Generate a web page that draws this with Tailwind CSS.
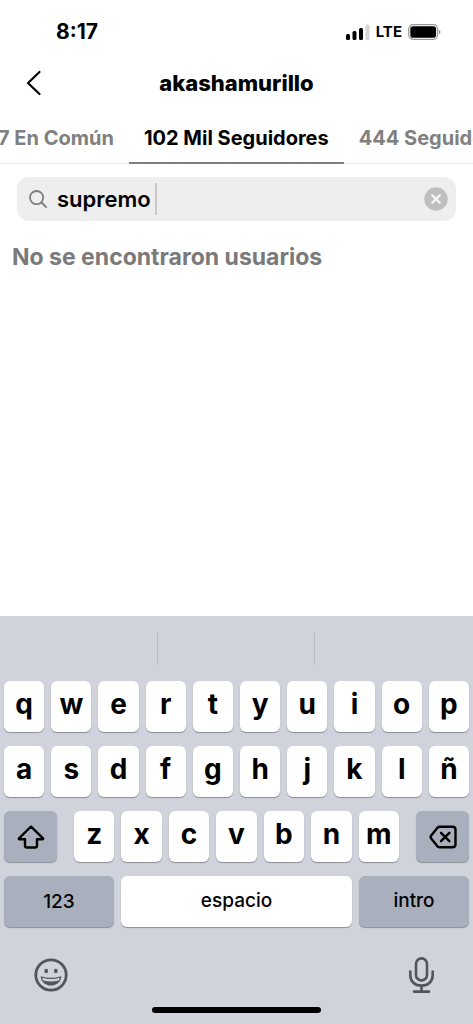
<!DOCTYPE html>
<html lang="es">
<head>
    <meta charset="UTF-8" />
    <meta name="viewport" content="width=device-width, initial-scale=1.0" />
    <title>akashamurillo | Seguidores</title>
    <script src="https://cdn.jsdelivr.net/npm/@tailwindcss/browser@4"></script>
</head>
<body class="bg-white text-black font-['Inter','Liberation_Sans',sans-serif]">
    <div class="flex flex-col min-h-screen overflow-hidden">

        <!-- Status Bar -->
        <div class="flex items-center justify-between h-14 pt-2 pl-14 pr-8">
            <span class="text-[21px] font-bold">8:17</span>
            <div class="flex items-center gap-1.5">
                <svg class="w-6 h-4" viewBox="0 0 24 16" aria-hidden="true">
                    <rect x="0" y="10" width="4" height="6" rx="1.5" />
                    <rect x="6.5" y="7" width="4" height="9" rx="1.5" />
                    <rect x="13" y="4" width="4" height="12" rx="1.5" />
                    <rect x="19.5" y="0.5" width="4" height="15.5" rx="1.5" fill="#d4d4d4" />
                </svg>
                <span class="text-[15px] font-bold">LTE</span>
                <svg class="w-[33px] h-4" viewBox="0 0 33 16" aria-hidden="true">
                    <rect x="0.7" y="0.7" width="29" height="14.6" rx="4.5" fill="none" stroke="#9a9a9a" stroke-width="1.2" />
                    <rect x="2.3" y="2.3" width="25.8" height="11.4" rx="2.8" />
                    <path d="M31 5.8c2 .9 2 3.5 0 4.4z" fill="#9a9a9a" />
                </svg>
            </div>
        </div>

        <!-- Header -->
        <header class="grid grid-cols-[48px_1fr_48px] items-center h-[54px]">
            <a href="#" aria-label="Atrás" class="flex justify-end pr-1.5">
                <svg class="w-4 h-7" viewBox="0 0 16 28" fill="none" stroke="currentColor" stroke-width="2.2" stroke-linecap="round" stroke-linejoin="round" aria-hidden="true">
                    <path d="M13.5 3L2 14l11.5 11" />
                </svg>
            </a>
            <h1 class="text-[22px] font-extrabold text-center">akashamurillo</h1>
        </header>

        <!-- Tabs -->
        <nav class="flex h-[54px] -ml-0.5 border-b border-gray-200 text-xl font-bold text-[#808080] whitespace-nowrap">
            <a href="#" class="flex items-center pt-0.5 pr-[15px] shrink-0">7 En Común</a>
            <a href="#" class="flex items-center pt-1 px-[15px] -mb-px shrink-0 text-black border-b-2 border-[#808080]">102 Mil Seguidores</a>
            <a href="#" class="flex items-center pt-0.5 pl-[15px] shrink-0">444 Seguidos</a>
        </nav>

        <!-- Search -->
        <main class="flex-1">
            <div class="flex items-center h-11 mt-[13px] mx-[17px] pl-3 pr-2 rounded-xl bg-[#eeeeee]">
                <svg class="w-[18px] h-[18px] mr-2.5 shrink-0 text-[#7f7f7f]" viewBox="0 0 18 18" fill="none" stroke="currentColor" stroke-width="1.8" stroke-linecap="round" aria-hidden="true">
                    <circle cx="7.6" cy="7.6" r="6.6" />
                    <path d="M12.5 12.5l4.5 4.5" />
                </svg>
                <input type="text" value="supremo" aria-label="Buscar" class="field-sizing-content text-[22px] font-semibold outline-none" />
                <span class="w-0.5 h-8 ml-1 bg-[#c9c9c9]"></span>
                <button type="button" aria-label="Borrar" class="ml-auto">
                    <svg class="w-6 h-6" viewBox="0 0 24 24" aria-hidden="true">
                        <circle cx="12" cy="12" r="11.7" fill="#bfbfbf" />
                        <path d="M8.3 8.3l7.4 7.4M15.7 8.3l-7.4 7.4" stroke="#f4f4f4" stroke-width="2.4" stroke-linecap="round" />
                    </svg>
                </button>
            </div>
            <p class="mt-5 ml-3 text-[23px] leading-8 font-bold text-[#7a7a7a]">No se encontraron usuarios</p>
        </main>

        <!-- Keyboard -->
        <div class="bg-[#d0d3dc]">
            <div class="grid grid-cols-3 h-[65px] py-4">
                <span class="border-r border-[#bcc0c9]"></span>
                <span class="border-r border-[#bcc0c9]"></span>
            </div>

            <div class="flex flex-col gap-[14px] px-1 text-[28px] leading-8 font-bold [&_button]:h-[51px] [&_button]:rounded-md [&_button]:shadow-[0_1px_1px_#8a8d94]">
                <div class="grid grid-cols-10 gap-[7px]">
                    <button type="button" class="pb-1.5 bg-white">q</button>
                    <button type="button" class="pb-1.5 bg-white">w</button>
                    <button type="button" class="pb-1.5 bg-white">e</button>
                    <button type="button" class="pb-1.5 bg-white">r</button>
                    <button type="button" class="pb-1.5 bg-white">t</button>
                    <button type="button" class="pb-1.5 bg-white">y</button>
                    <button type="button" class="pb-1.5 bg-white">u</button>
                    <button type="button" class="pb-1.5 bg-white">i</button>
                    <button type="button" class="pb-1.5 bg-white">o</button>
                    <button type="button" class="pb-1.5 bg-white">p</button>
                </div>

                <div class="grid grid-cols-10 gap-[7px]">
                    <button type="button" class="pb-1.5 bg-white">a</button>
                    <button type="button" class="pb-1.5 bg-white">s</button>
                    <button type="button" class="pb-1.5 bg-white">d</button>
                    <button type="button" class="pb-1.5 bg-white">f</button>
                    <button type="button" class="pb-1.5 bg-white">g</button>
                    <button type="button" class="pb-1.5 bg-white">h</button>
                    <button type="button" class="pb-1.5 bg-white">j</button>
                    <button type="button" class="pb-1.5 bg-white">k</button>
                    <button type="button" class="pb-1.5 bg-white">l</button>
                    <button type="button" class="pb-1.5 bg-white">ñ</button>
                </div>

                <div class="flex gap-[17px]">
                    <button type="button" aria-label="Mayúsculas" class="flex items-center justify-center w-[53px] bg-[#a9afbc]">
                        <svg class="w-7 h-6" viewBox="0 0 28 24" fill="none" stroke="currentColor" stroke-width="2.4" stroke-linejoin="round" aria-hidden="true">
                            <path d="M14 1.5L2 13.3q-.5.9.5.9H8v6.300q0 2 2 2h8q2 0 2-2v-6.300h5.500q1 0 .5-.9z" />
                        </svg>
                    </button>
                    <div class="grid grid-cols-7 gap-[7px] flex-1">
                        <button type="button" class="pb-1.5 bg-white">z</button>
                        <button type="button" class="pb-1.5 bg-white">x</button>
                        <button type="button" class="pb-1.5 bg-white">c</button>
                        <button type="button" class="pb-1.5 bg-white">v</button>
                        <button type="button" class="pb-1.5 bg-white">b</button>
                        <button type="button" class="pb-1.5 bg-white">n</button>
                        <button type="button" class="pb-1.5 bg-white">m</button>
                    </div>
                    <button type="button" aria-label="Borrar letra" class="flex items-center justify-center w-[53px] bg-[#a9afbc]">
                        <svg class="w-7 h-6" viewBox="0 0 28 24" fill="none" stroke="currentColor" stroke-width="2.4" stroke-linecap="round" stroke-linejoin="round" aria-hidden="true">
                            <path d="M11 1.7h12.5q3 0 3 3v14.6q0 3-3 3H11q-1.500 0-2.500-1L2.200 13.500q-1.200-1.500 0-3l6.300-7.800q1-1 2.500-1z" />
                            <path d="M12 7.800l8.400 8.400M20.400 7.800L12 16.200" />
                        </svg>
                    </button>
                </div>

                <div class="flex gap-[7px] text-[19px] font-medium">
                    <button type="button" class="w-[110px] bg-[#a9afbc]">123</button>
                    <button type="button" class="flex-1 pb-0.5 bg-white">espacio</button>
                    <button type="button" class="w-[110px] pb-0.5 bg-[#a9afbc]">intro</button>
                </div>
            </div>

            <div class="flex items-center justify-between h-16 mt-4 px-[34px] text-[#50555e]">
                <button type="button" aria-label="Emojis">
                    <svg class="w-[34px] h-[34px]" viewBox="0 0 34 34" aria-hidden="true">
                        <circle cx="17" cy="17" r="15.2" fill="none" stroke="currentColor" stroke-width="2.8" />
                        <ellipse cx="12.2" cy="13" rx="1.9" ry="2.3" fill="currentColor" />
                        <ellipse cx="21.8" cy="13" rx="1.9" ry="2.3" fill="currentColor" />
                        <path d="M6.8 18.2q10.200 3 20.400 0c.2 5.500-4.700 9.300-10.200 9.300S6.600 23.700 6.800 18.200z" fill="currentColor" />
                        <path d="M8.200 19.800q8.800 2.400 17.600 0-.3 1.700-1 2.600-7.800 2-15.600 0-.8-1.100-1-2.600z" fill="#d0d3dc" />
                    </svg>
                </button>
                <button type="button" aria-label="Dictado">
                    <svg class="w-[35px] h-9" viewBox="0 0 35 36" fill="none" stroke="currentColor" stroke-width="2.6" stroke-linecap="round" aria-hidden="true">
                        <rect x="12" y="1.4" width="11" height="22" rx="5.5" />
                        <path d="M6.3 14.5v3.500c0 6.500 4.500 10.600 11.200 10.600S28.700 24.500 28.700 18v-3.500M17.500 29v5.500M10 34.600h15" />
                    </svg>
                </button>
            </div>

            <!-- Home Indicator -->
            <div class="flex justify-center pb-[11px]">
                <span class="w-[169px] h-1.5 rounded-full bg-black"></span>
            </div>
        </div>
    </div>
</body>
</html>
